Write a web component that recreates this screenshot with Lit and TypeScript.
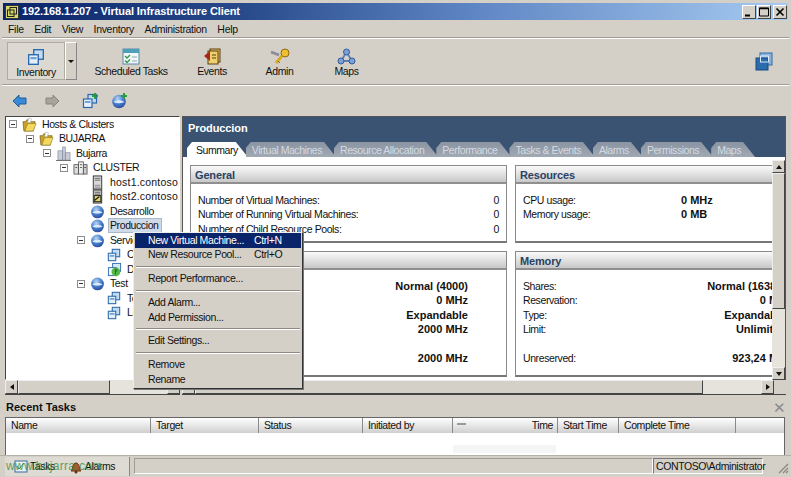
import { LitElement, html, css, svg } from "lit";
import { customElement } from "lit/decorators.js";

const vmIcon = (s = 15, plus = false, color = "#2a68ad") => html`<svg width=${s} height=${s} viewBox="0 0 16 16"><rect x="6" y="1.5" width="8.5" height="8.5" fill="#c4daf0" stroke=${color} stroke-width="1.2"/><rect x="1.5" y="6" width="8.5" height="8.5" fill="#e4effa" stroke=${color} stroke-width="1.2"/><rect x="3" y="8" width="5.5" height="2" fill="#6fa4d8"/>${plus ? svg`<path d="M13 0v6M10 3h6" stroke="#2a9a3a" stroke-width="2"/>` : ""}</svg>`;
const poolIcon = (s = 15, plus = false) => html`<svg width=${s} height=${s} viewBox="0 0 16 16"><defs><radialGradient id="g" cx=".4" cy=".3" r=".8"><stop offset="0" stop-color="#b6d4f4"/><stop offset=".55" stop-color="#3f78c8"/><stop offset="1" stop-color="#2a3f90"/></radialGradient></defs><circle cx="8" cy="8.5" r="6.8" fill="url(#g)"/><path d="M2.5 9c3-2.5 7-2.5 11 0-3 1.5-8 1.5-11 0z" fill="#dcecfb"/>${plus ? svg`<path d="M13 0v6M10 3h6" stroke="#2a9a3a" stroke-width="2"/>` : ""}</svg>`;
const folderIcon = () => html`<svg width="15" height="15" viewBox="0 0 16 16"><path d="M1 5h3l1-2h4v2h5l-2 10H2z" fill="#c9a227" stroke="#6e5a18" stroke-width=".7"/><path d="M3 15l3-8h9l-3 8z" fill="#f4d85f" stroke="#8b7420" stroke-width=".6"/><path d="M7 1l3 1-1 4-3 0z" fill="#fff" stroke="#999" stroke-width=".5"/></svg>`;
const dcIcon = () => html`<svg width="15" height="15" viewBox="0 0 16 16"><path d="M2 15V5h5v10zM7 15V1h3v14zM10 15V7h5v8z" fill="#c7ccd6" stroke="#8a90a0" stroke-width=".7"/><path d="M0 15.5h16" stroke="#666"/></svg>`;
const clusterIcon = () => html`<svg width="15" height="15" viewBox="0 0 16 16"><rect x="1" y="5" width="5" height="10" fill="#ddd" stroke="#444" stroke-width=".8"/><rect x="6" y="2" width="5" height="13" fill="#eee" stroke="#444" stroke-width=".8"/><rect x="11" y="5" width="4" height="10" fill="#ccc" stroke="#444" stroke-width=".8"/><path d="M7.5 5h2M7.5 8h2M2.5 8h2M12 8h2" stroke="#555"/></svg>`;
const hostIcon = (warn = false) => html`<svg width="15" height="15" viewBox="0 0 16 16"><rect x="3.5" y="1" width="9" height="14" fill=${warn ? "#c8c8c0" : "#d8d8d8"} stroke="#333"/><path d="M5 3.5h6M5 5.5h6" stroke="#666"/>${warn ? svg`<rect x="4.5" y="7" width="7" height="6.5" fill="#e8d860" stroke="#222"/><path d="M5 12l5-4" stroke="#222" stroke-width="1.5"/>` : svg`<path d="M5 11h6M5 13h6" stroke="#888"/>`}</svg>`;
const vmOn = () => html`<svg width="15" height="15" viewBox="0 0 16 16"><rect x="6" y="1.5" width="8.5" height="8.5" fill="#d9e8f7" stroke="#2f6fb5"/><rect x="1.5" y="6" width="8.5" height="8.5" fill="#eef5fc" stroke="#2f6fb5"/><circle cx="9.5" cy="10.5" r="4.7" fill="#56b848"/><path d="M9 7.5v6M9 7.5l2 1.5-2 1.5" stroke="#1e6b20" fill="none"/></svg>`;

const icons: Record<string, () => unknown> = {
  folder: folderIcon, dc: dcIcon, cluster: clusterIcon,
  host: () => hostIcon(false), hostw: () => hostIcon(true),
  pool: () => poolIcon(15), vm: () => vmIcon(14), vmon: vmOn,
};

const tree = [
  { d: 0, box: 1, i: "folder", t: "Hosts & Clusters" },
  { d: 1, box: 1, i: "folder", t: "BUJARRA" },
  { d: 2, box: 1, i: "dc", t: "Bujarra" },
  { d: 3, box: 1, i: "cluster", t: "CLUSTER" },
  { d: 4, box: 0, i: "host", t: "host1.contoso.", wide: 1 },
  { d: 4, box: 0, i: "hostw", t: "host2.contoso.", wide: 1 },
  { d: 4, box: 0, i: "pool", t: "Desarrollo" },
  { d: 4, box: 0, i: "pool", t: "Produccion", sel: 1 },
  { d: 4, box: 1, i: "pool", t: "Servidores" },
  { d: 5, box: 0, i: "vm", t: "Correo" },
  { d: 5, box: 0, i: "vmon", t: "DC" },
  { d: 4, box: 1, i: "pool", t: "Test" },
  { d: 5, box: 0, i: "vm", t: "Test1" },
  { d: 5, box: 0, i: "vm", t: "Linux" },
];

const menu: (string | [string, string?])[] = [
  ["New Virtual Machine...", "Ctrl+N"], ["New Resource Pool...", "Ctrl+O"], "-",
  ["Report Performance..."], "-", ["Add Alarm..."], ["Add Permission..."], "-",
  ["Edit Settings..."], "-", ["Remove"], ["Rename"],
];

const tabs = ["Summary", "Virtual Machines", "Resource Allocation", "Performance", "Tasks & Events", "Alarms", "Permissions", "Maps"];
const cols: [string, number, string?][] = [
  ["Name", 145], ["Target", 108], ["Status", 104], ["Initiated by", 90], ["Time", 105, "r"], ["Start Time", 61], ["Complete Time", 117], ["", 50],
];

@customElement("app-root")
export class AppRoot extends LitElement {
  static styles = css`
    :host { display: block; width: 791px; height: 477px; overflow: hidden; position: relative; background: #d4d0c8;
      font: 10.5px/13px "Liberation Sans", Arial, sans-serif; letter-spacing: -.4px; color: #111; }
    .title { margin: 3px 3px 0; height: 17px; display: flex; align-items: center; gap: 3px; padding-left: 2px; color: #fff; font-weight: bold; font-size: 11px; letter-spacing: -.1px;
      background: linear-gradient(90deg, #0a246a 0%, #27498a 30%, #5f86c4 60%, #a6caf0 100%); }
    .title .t { flex: 1; }
    .wb { display: flex; gap: 1px; margin-right: 1px; }
    .wb span { width: 14px; height: 14px; background: #d4d0c8; border: 1px solid; border-color: #fff #444 #444 #fff; box-sizing: border-box; display: flex; }
    .menubar { display: flex; gap: 10.5px; padding: 3px 0 0 8px; box-sizing: border-box; height: 17px; letter-spacing: -.3px; }
    .sep { height: 2px; background: linear-gradient(#a09c94 50%, #fff 50%); margin: 0 2px; }
    .tb { height: 45px; display: flex; padding: 3px 0 0 7px; box-sizing: border-box; align-items: flex-start; }
    .tool { display: flex; flex-direction: column; align-items: center; height: 38px; box-sizing: border-box; padding-top: 6px; gap: 0; white-space: nowrap; }
    .tool.sel { width: 58px; border: 1px solid; border-color: #fff #9a968e #9a968e #fff; background: #dcd9d2; outline: 1px solid #b0aca4; outline-offset: -1px; padding-top: 5px; }
    .drop { width: 12px; height: 38px; border: 1px solid; border-color: #fff #888 #888 #fff; box-sizing: border-box; display: flex; align-items: center; justify-content: center; margin-right: 7px; }
    .drop i { border: 3px solid transparent; border-top-color: #111; border-bottom: 0; }
    .tb .sp { flex: 1; }
    .tb .r { margin: 10px 18px 0 0; }
    .nav { height: 30px; display: flex; align-items: center; padding-left: 12px; box-sizing: border-box; }
    .main { display: flex; height: 264px; padding: 0 5px 0 5px; gap: 2px; }
    .treebox { width: 175px; background: #fff; border: 1px solid; border-color: #444 #fff #fff #444; box-sizing: border-box; overflow: hidden; }
    .row { height: 14.5px; display: flex; align-items: center; white-space: nowrap; position: relative; }
    .ind { flex: none; }
    .box { width: 8px; height: 8px; border: 1px solid #8d8d8d; box-sizing: border-box; margin-right: 5px; flex: none; position: relative; background: #fff; }
    .box::after { content: ""; position: absolute; left: 1px; right: 1px; top: 2.5px; height: 1px; background: #333; }
    .ico { flex: none; display: flex; width: 15px; margin-right: 4px; }
    .lbl { padding: 0 2px 0 1px; height: 13px; }
    .lbl.wide { letter-spacing: .2px; }
    .lbl.sel { background: #cfdae9; outline: 1px solid #a9b7cd; }
    .right { flex: 1; background: #3b5372; border: 1px solid #555; border-width: 1px 1px 0 1px; display: flex; flex-direction: column; overflow: hidden; box-sizing: border-box; }
    .rh { height: 25px; padding: 5px 0 0 5px; box-sizing: border-box; color: #fff; font-weight: bold; font-size: 11px; letter-spacing: -.1px; }
    .tabs { display: flex; height: 15px; padding-left: 4px; letter-spacing: -.45px; }
    .tab { padding: 2px 14px 0 6px; margin-right: -2px; height: 15px; box-sizing: border-box; color: #d5dbe2; white-space: nowrap;
      background: linear-gradient(#8a94a2, #a1a9b3); clip-path: polygon(5px 0, calc(100% - 12px) 0, 100% 100%, 0 100%, 0 6px); }
    .tab.on { background: #fff; color: #111; padding: 2px 10px 0 9px; }
    .body { flex: 1; background: #fff; display: flex; overflow: hidden; }
    .scrollarea { flex: 1; overflow: hidden; padding: 8px 0 0 7px; display: grid; grid-template-columns: 317px 279px; grid-template-rows: 78px 126px; gap: 8px; box-sizing: border-box; width: 590px; min-width: 0; }
    .panel { border: 1px solid #8a8a8a; border-bottom: 2px solid #777; box-sizing: border-box; background: #fff; position: relative; }
    .ph { height: 18px; padding: 3px 0 0 4px; box-sizing: border-box; font-weight: bold; font-size: 11px; letter-spacing: -.15px; color: #2a4263; background: linear-gradient(#fafafa, #c8c8c8); border-bottom: 2px solid #8f8f8f; }
    .pb { padding: 10px 7px 0 7px; }
    .kv { display: flex; height: 14.4px; justify-content: space-between; white-space: nowrap; }
    .kv b { font-weight: bold; font-size: 11px; letter-spacing: 0; }
    .kv.abs b { position: absolute; left: 165px; }
    .pb.cpu { padding-right: 38px; }
    .pb.mem { padding-right: 7px; }
    .vs { width: 13px; flex: none; display: flex; flex-direction: column; padding-top: 3px; background: #fff; }
    .btn { width: 13px; height: 13px; flex: none; background: #d4d0c8; border: 1px solid; border-color: #eee #444 #444 #eee; box-sizing: border-box; display: flex; align-items: center; justify-content: center; }
    .thumb { background: #d4d0c8; border: 1px solid; border-color: #eee #444 #444 #eee; box-sizing: border-box; }
    .dith { background: #e6e3dd; }
    .up { border: 3px solid transparent; border-bottom: 4px solid #111; border-top: 0; }
    .dn { border: 3px solid transparent; border-top: 4px solid #111; border-bottom: 0; }
    .lf { border: 3px solid transparent; border-right: 4px solid #111; border-left: 0; }
    .rt { border: 3px solid transparent; border-left: 4px solid #111; border-right: 0; }
    .hrow { display: flex; height: 15px; padding: 0 5px 0 5px; gap: 2px; }
    .hs { display: flex; height: 15px; box-sizing: border-box; border-bottom: 1px solid #444; }
    .hs .btn { height: 14px; }
    .rt-bar { height: 22px; display: flex; align-items: center; justify-content: space-between; padding: 2px 5px 0 6px; box-sizing: border-box; font-weight: bold; font-size: 11px; letter-spacing: 0; }
    .rt-bar .x { color: #8a8a8a; font-size: 15px; font-weight: normal; }
    .table { margin: 0 6px 0 5px; height: 38px; background: #fff; border: 1px solid #666; border-bottom: 0; box-sizing: border-box; overflow: hidden; }
    .thead { display: flex; height: 15px; background: linear-gradient(#fff, #cfcfcf); }
    .th { box-sizing: border-box; padding: 1px 4px 0 5px; border-right: 1px solid #8a8a8a; position: relative; white-space: nowrap; flex: none; }
    .th.r { text-align: right; }
    .sort { position: absolute; left: 4px; top: 5px; width: 9px; height: 2px; background: #999; }
    .tbody { position: relative; height: 24px; }
    .ghost { position: absolute; left: 447px; top: 12px; width: 103px; height: 8px; background: #f5f5f5; }
    .status { height: 21px; display: flex; padding: 1px 2px 0 5px; box-sizing: border-box; align-items: stretch; position: relative; border-top: 1px solid #b5b1a9; }
    .stabs { width: 125px; background: #dedbd4; border-right: 1px solid #888; display: flex; align-items: center; box-sizing: border-box; padding-left: 9px; }
    .stab { display: flex; align-items: center; gap: 2px; margin-right: 14px; }
    .status .mid { flex: 1; border: 1px solid; border-color: #a09c94 #fff #fff #a09c94; margin: 1px 0 2px 4px; }
    .status .user { width: 110px; border: 1px solid; border-color: #777 #fff #fff #777; margin: 1px 0 2px 0; padding-left: 2px; box-sizing: border-box; white-space: nowrap; line-height: 15px; flex: none; }
    .grip { width: 26px; display: flex; align-items: flex-end; justify-content: flex-end; padding-bottom: 2px; flex: none; }
    .wm { position: absolute; left: 6px; top: 460px; color: #2e8b3a; opacity: .75; font-size: 12px; letter-spacing: .3px; pointer-events: none; }
    .ctx { position: absolute; left: 133px; top: 232px; width: 170px; height: 157px; box-sizing: border-box; background: #d4d0c8; border: 1px solid; border-color: #eee #333 #333 #eee; box-shadow: 1px 1px 0 #777; padding: 0 1px; }
    .mi { height: 14.6px; display: flex; align-items: center; padding-left: 13px; white-space: nowrap; }
    .mi span:first-child { width: 106px; flex: none; }
    .mi.hi { background: #0a246a; color: #fff; }
    .ms { height: 2px; margin: 3.6px 1px 3.6px; background: linear-gradient(#8f8b83 50%, #fff 50%); }
  `;

  render() {
    const tool = (icon: unknown, label: string, w: number) => html`<div class="tool" style="width:${w}px">${icon}<span>${label}</span></div>`;
    return html`
      <div class="title">
        <svg width="14" height="14" viewBox="0 0 14 14"><rect x=".5" y=".5" width="13" height="13" fill="#d6d96a" stroke="#333"/><rect x="5" y="2.5" width="6.5" height="6.5" fill="none" stroke="#222"/><rect x="2.5" y="5" width="6.5" height="6.5" fill="none" stroke="#222"/></svg>
        <span class="t">192.168.1.207 - Virtual Infrastructure Client</span>
        <div class="wb">
          <span><svg width="12" height="12"><path d="M2 9.5h5" stroke="#000" stroke-width="2"/></svg></span>
          <span><svg width="12" height="12"><path d="M1.5 2h9v8h-9z" fill="none" stroke="#000"/><path d="M1 2.5h10" stroke="#000" stroke-width="1.5"/></svg></span>
          <span style="margin-left:1px"><svg width="12" height="12"><path d="M2.5 2.5l7 7M9.5 2.5l-7 7" stroke="#000" stroke-width="1.6"/></svg></span>
        </div>
      </div>
      <div class="menubar"><span>File</span><span>Edit</span><span>View</span><span>Inventory</span><span>Administration</span><span>Help</span></div>
      <div class="sep"></div>
      <div class="tb">
        <div class="tool sel">${vmIcon(18)}<span>Inventory</span></div>
        <div class="drop"><i></i></div>
        ${tool(html`<svg width="18" height="17" viewBox="0 0 18 17"><rect x="1" y="1" width="16" height="15" fill="#f2f7fb" stroke="#5a86a8"/><rect x="1" y="1" width="16" height="4" fill="#4ea0b8"/><path d="M3 8l2 2 3-3M3 12.5l2 2 3-3" stroke="#2f9a4a" fill="none" stroke-width="1.4"/><path d="M10 9h5M10 13h5" stroke="#8aa"/></svg>`, "Scheduled Tasks", 94)}
        ${tool(html`<svg width="18" height="17" viewBox="0 0 18 17"><rect x="7" y="1" width="10" height="13" fill="#e7c860" stroke="#5a3a10"/><rect x="5" y="3" width="10" height="13" fill="#efd070" stroke="#5a3a10"/><path d="M1 8l6-5v10z" fill="#a82818"/><path d="M9 7h4M9 10h4" stroke="#5a3a10"/></svg>`, "Events", 68)}
        ${tool(html`<svg width="20" height="17" viewBox="0 0 20 17"><path d="M1 4l8 3" stroke="#8a8a98" stroke-width="2.5"/><circle cx="15" cy="5" r="4" fill="#f0c030" stroke="#8a6a18"/><path d="M12 8l-6 7" stroke="#d8a820" stroke-width="3"/><path d="M8 13l2 2" stroke="#8a6a18"/></svg>`, "Admin", 67)}
        ${tool(html`<svg width="19" height="17" viewBox="0 0 19 17"><path d="M9.5 4L4 13h11z" fill="none" stroke="#5a80b8" stroke-width="1.8"/><circle cx="9.5" cy="4" r="3" fill="#7aa0d8" stroke="#3a5a98"/><circle cx="4" cy="13" r="3" fill="#7aa0d8" stroke="#3a5a98"/><circle cx="15" cy="13" r="3" fill="#7aa0d8" stroke="#3a5a98"/></svg>`, "Maps", 67)}
        <div class="sp"></div>
        <div class="r"><svg width="18" height="19" viewBox="0 0 18 19"><rect x="5" y="1" width="12" height="12" fill="#8fb4dc" stroke="#2f6aa8"/><rect x="1" y="6" width="12" height="12" fill="#2a6cac" stroke="#174a80"/><rect x="5.5" y="4" width="8" height="6" fill="none" stroke="#dcecfb"/></svg></div>
      </div>
      <div class="sep"></div>
      <div class="nav">
        <svg width="15" height="14" viewBox="0 0 15 14"><path d="M1 7l6-6v3h7v6H7v3z" fill="#3a8ad8" stroke="#1f5a98"/></svg>
        <svg style="margin-left:18px" width="15" height="14" viewBox="0 0 15 14"><path d="M14 7L8 1v3H1v6h7v3z" fill="#a8a49c" stroke="#8a867e"/></svg>
        <span style="margin-left:22px;display:flex">${vmIcon(16, true)}</span>
        <span style="margin-left:13px;display:flex">${poolIcon(16, true)}</span>
      </div>
      <div class="main">
        <div class="treebox">
          ${tree.map(r => html`<div class="row"><span class="ind" style="width:${3 + r.d * 17}px"></span>${r.box ? html`<span class="box"></span>` : html`<span style="width:13px;flex:none"></span>`}<span class="ico">${icons[r.i]()}</span><span class="lbl ${r.sel ? "sel" : ""} ${r.wide ? "wide" : ""}">${r.t}</span></div>`)}
        </div>
        <div class="right">
          <div class="rh">Produccion</div>
          <div class="tabs">${tabs.map((t, i) => html`<div class="tab ${i === 0 ? "on" : ""}">${t}</div>`)}</div>
          <div class="body">
            <div class="scrollarea">
              <div class="panel" style="width:317px"><div class="ph">General</div><div class="pb">
                <div class="kv"><span>Number of Virtual Machines:</span><span>0</span></div>
                <div class="kv"><span>Number of Running Virtual Machines:</span><span>0</span></div>
                <div class="kv"><span>Number of Child Resource Pools:</span><span>0</span></div>
              </div></div>
              <div class="panel" style="width:258px"><div class="ph">Resources</div><div class="pb">
                <div class="kv abs"><span>CPU usage:</span><b>0 MHz</b></div>
                <div class="kv abs"><span>Memory usage:</span><b>0 MB</b></div>
              </div></div>
              <div class="panel" style="width:317px"><div class="ph">CPU</div><div class="pb cpu">
                <div class="kv"><span>Shares:</span><b>Normal (4000)</b></div>
                <div class="kv"><span>Reservation:</span><b>0 MHz</b></div>
                <div class="kv"><span>Type:</span><b>Expandable</b></div>
                <div class="kv"><span>Limit:</span><b>2000 MHz</b></div>
                <div class="kv"></div>
                <div class="kv"><span>Unreserved:</span><b>2000 MHz</b></div>
              </div></div>
              <div class="panel"><div class="ph">Memory</div><div class="pb mem">
                <div class="kv"><span>Shares:</span><b>Normal (16384)</b></div>
                <div class="kv"><span>Reservation:</span><b>0 MB</b></div>
                <div class="kv"><span>Type:</span><b>Expandable</b></div>
                <div class="kv"><span>Limit:</span><b>Unlimited</b></div>
                <div class="kv"></div>
                <div class="kv"><span>Unreserved:</span><b>923,24 MB</b></div>
              </div></div>
            </div>
            <div class="vs">
              <div class="btn"><i class="up"></i></div>
              <div class="thumb" style="height:136px"></div>
              <div class="dith" style="flex:1"></div>
              <div class="btn"><i class="dn"></i></div>
            </div>
          </div>
        </div>
      </div>
      <div class="hrow">
        <div class="hs" style="width:175px"><div class="btn"><i class="lf"></i></div><div class="thumb" style="width:92px"></div><div class="dith" style="flex:1"></div><div class="btn"><i class="rt"></i></div></div>
        <div class="hs" style="flex:1"><div class="btn"><i class="lf"></i></div><div class="thumb" style="width:508px"></div><div class="dith" style="flex:1"></div><div class="btn"><i class="rt"></i></div><div style="width:12px;background:#d4d0c8"></div></div>
      </div>
      <div class="rt-bar"><span>Recent Tasks</span><span class="x">✕</span></div>
      <div class="table">
        <div class="thead">${cols.map(c => html`<div class="th ${c[2] || ""}" style="width:${c[1]}px">${c[2] ? html`<i class="sort"></i>` : ""}${c[0]}</div>`)}</div>
        <div class="tbody"><div class="ghost"></div></div>
      </div>
      <div class="status">
        <div class="stabs">
          <div class="stab"><svg width="14" height="13" viewBox="0 0 14 13"><rect x="1" y="1" width="12" height="11" fill="#e8f0f8" stroke="#3a6a98"/><path d="M3 6l2 3 5-6" stroke="#2a9a4a" fill="none"/></svg><span>Tasks</span></div>
          <div class="stab"><svg width="14" height="14" viewBox="0 0 14 14"><path d="M2 11c2-1 1-8 5-8s3 7 5 8z" fill="#a85a30" stroke="#6a3010"/><circle cx="7" cy="12" r="1.5" fill="#6a3010"/></svg><span>Alarms</span></div>
        </div>
        <div class="mid"></div>
        <div class="user">CONTOSO\\Administrator</div>
        <div class="grip"><svg width="12" height="12"><path d="M11 2L2 11M11 6l-5 5M11 9l-2 2" stroke="#8a867e" stroke-width="1.2"/></svg></div>
      </div>
      <div class="wm">www.bujarra.com</div>
      <div class="ctx">
        ${menu.map((m, i) => m === "-" ? html`<div class="ms"></div>` : html`<div class="mi ${i === 0 ? "hi" : ""}"><span>${m[0]}</span><span>${m[1] || ""}</span></div>`)}
      </div>
    `;
  }
}
